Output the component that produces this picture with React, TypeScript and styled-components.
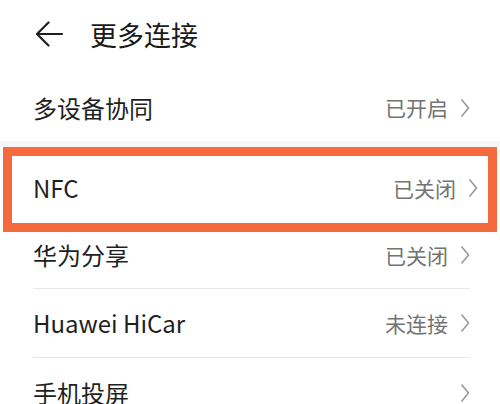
import React from 'react';
import styled, { createGlobalStyle } from 'styled-components';

const GlobalStyle = createGlobalStyle`
  html, body {
    margin: 0;
    padding: 0;
    background: #ffffff;
  }
  body {
    font-family: 'Noto Sans CJK SC', 'Noto Sans', sans-serif;
    color: #1f1f1f;
  }
`;

const Page = styled.div`
  width: 500px;
  height: 404px;
  overflow: hidden;
  background: #ffffff;
`;

const Header = styled.div`
  height: 68px;
  display: flex;
  align-items: center;
  padding-left: 35px;
  gap: 27px;
  box-sizing: border-box;
`;

const Title = styled.h1`
  margin: 0;
  font-size: 27px;
  font-weight: 400;
  color: #1a1a1a;
  line-height: 1;
`;

const Row = styled.div<{ $height: number }>`
  height: ${({ $height }) => $height}px;
  padding: 0 30px 0 33px;
  box-sizing: border-box;
  display: flex;
`;

const RowInner = styled.div<{ $offset?: number; $divider?: boolean }>`
  flex: 1;
  display: flex;
  align-items: center;
  justify-content: space-between;
  padding-top: ${({ $offset }) => ($offset && $offset > 0 ? $offset : 0)}px;
  padding-bottom: ${({ $offset }) => ($offset && $offset < 0 ? -$offset : 0)}px;
  border-bottom: ${({ $divider }) => ($divider ? '1.5px solid #e8e8e8' : 'none')};
`;

const Highlight = styled.div`
  margin: 0 3px;
  height: 85px;
  border: 9px solid #f46a3c;
  box-sizing: border-box;
  padding: 0 10px 3px 21px;
  display: flex;
  align-items: center;
  justify-content: space-between;
`;

const GroupGap = styled.div`
  height: 6px;
  background: #f6f6f6;
`;

const Label = styled.span`
  font-size: 24px;
  color: #1f1f1f;
  line-height: 1;
`;

const Status = styled.span`
  display: flex;
  align-items: center;
  gap: 12px;
  font-size: 21px;
  color: #737373;
  line-height: 1;
`;

const Chevron = () => (
  <svg width="10" height="20" viewBox="0 0 10 20">
    <polyline points="1.5,1.5 8.5,10 1.5,18.5" fill="none" stroke="#9a9a9a" strokeWidth="1.6" />
  </svg>
);

const BackArrow = () => (
  <svg width="28" height="28" viewBox="0 0 28 28">
    <path d="M2 14 H27 M13.5 2.5 L2 14 L13.5 25.5" fill="none" stroke="#1f1f1f" strokeWidth="2.2" strokeLinecap="round" strokeLinejoin="round" />
  </svg>
);

const StatusText: React.FC<{ text?: string }> = ({ text }) => (
  <Status>
    {text}
    <Chevron />
  </Status>
);

export default function App() {
  return (
    <Page>
      <GlobalStyle />
      <Header>
        <BackArrow />
        <Title>更多连接</Title>
      </Header>

      <Row $height={73}>
        <RowInner $offset={6}>
          <Label>多设备协同</Label>
          <StatusText text="已开启" />
        </RowInner>
      </Row>
      <GroupGap />

      <Highlight>
        <Label>NFC</Label>
        <StatusText text="已关闭" />
      </Highlight>

      <Row $height={57}>
        <RowInner $offset={-10} $divider>
          <Label>华为分享</Label>
          <StatusText text="已关闭" />
        </RowInner>
      </Row>

      <Row $height={69}>
        <RowInner $divider>
          <Label>Huawei HiCar</Label>
          <StatusText text="未连接" />
        </RowInner>
      </Row>

      <Row $height={69}>
        <RowInner>
          <Label>手机投屏</Label>
          <StatusText />
        </RowInner>
      </Row>
    </Page>
  );
}
